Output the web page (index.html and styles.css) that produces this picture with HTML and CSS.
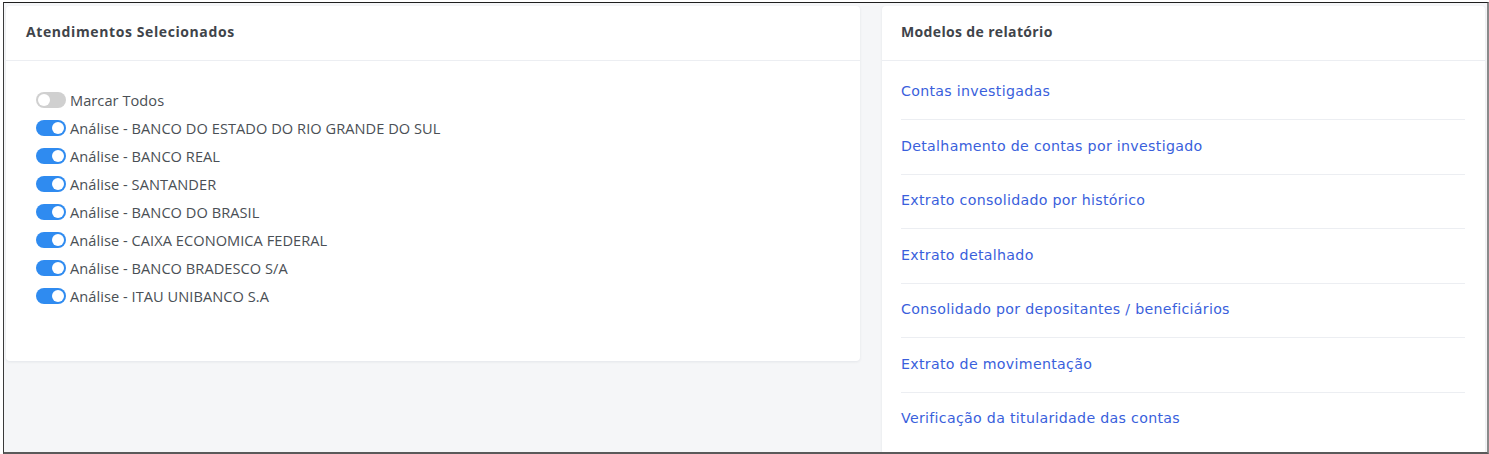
FILE: index.html
```html
<!DOCTYPE html>
<html lang="pt-BR">
<head>
<meta charset="utf-8">
<title>Relatórios</title>
<link rel="stylesheet" href="styles.css">
</head>
<body>
<div class="frame">
  <div class="layout">
    <section class="card card-left">
      <header class="card-header"><h4 class="card-title">Atendimentos Selecionados</h4></header>
      <div class="card-body">
        <label class="switch-row"><span class="switch"></span><span class="switch-label">Marcar Todos</span></label>
        <label class="switch-row"><span class="switch on"></span><span class="switch-label">Análise - BANCO DO ESTADO DO RIO GRANDE DO SUL</span></label>
        <label class="switch-row"><span class="switch on"></span><span class="switch-label">Análise - BANCO REAL</span></label>
        <label class="switch-row"><span class="switch on"></span><span class="switch-label">Análise - SANTANDER</span></label>
        <label class="switch-row"><span class="switch on"></span><span class="switch-label">Análise - BANCO DO BRASIL</span></label>
        <label class="switch-row"><span class="switch on"></span><span class="switch-label">Análise - CAIXA ECONOMICA FEDERAL</span></label>
        <label class="switch-row"><span class="switch on"></span><span class="switch-label">Análise - BANCO BRADESCO S/A</span></label>
        <label class="switch-row"><span class="switch on"></span><span class="switch-label">Análise - ITAU UNIBANCO S.A</span></label>
      </div>
    </section>
    <section class="card card-right">
      <header class="card-header"><h4 class="card-title">Modelos de relatório</h4></header>
      <ul class="report-list">
        <li class="report-item"><a href="#">Contas investigadas</a></li>
        <li class="report-item"><a href="#">Detalhamento de contas por investigado</a></li>
        <li class="report-item"><a href="#">Extrato consolidado por histórico</a></li>
        <li class="report-item"><a href="#">Extrato detalhado</a></li>
        <li class="report-item"><a href="#">Consolidado por depositantes / beneficiários</a></li>
        <li class="report-item"><a href="#">Extrato de movimentação</a></li>
        <li class="report-item"><a href="#">Verificação da titularidade das contas</a></li>
      </ul>
    </section>
  </div>
</div>
</body>
</html>
```
FILE: styles.css
```css
* { box-sizing: border-box; }
html, body { margin: 0; padding: 0; background: #ffffff; }
body {
  font-family: "Open Sans", "Liberation Sans", sans-serif;
  font-size: 14px;
  color: #495057;
}
.frame {
  margin: 2px 0 0 3px;
  width: 1486px;
  height: 452px;
  border-style: solid;
  border-color: #1e1e1e #8a8a8a #5a5a5a #3a3a3a;
  border-width: 1px 2px 2px 1px;
  background: #f5f6f8;
  overflow: hidden;
}
.layout {
  display: flex;
  align-items: flex-start;
  gap: 22px;
  padding: 3px 0 0 2px;
}
.card {
  background: #ffffff;
  border-radius: 4px;
  box-shadow: 0 1px 3px rgba(18, 38, 63, 0.08);
}
.card-left { width: 854px; height: 355px; }
.card-right { width: 603px; height: 460px; }
.card-header {
  height: 55px;
  border-bottom: 1px solid #eceef2;
  display: flex;
  align-items: center;
  padding: 0 20px 3px;
}
.card-right .card-header { padding-left: 19px; }
.card-title {
  margin: 0;
  font-size: 14px;
  font-weight: 700;
  letter-spacing: 0.6px;
  color: #3f444a;
}
.card-right .card-title { letter-spacing: 0.35px; }
.card-body {
  padding: 25px 30px 0;
  display: flex;
  flex-direction: column;
}
.switch-row {
  display: flex;
  align-items: center;
  height: 28px;
  gap: 4px;
}
.switch {
  position: relative;
  width: 30px;
  height: 16px;
  border-radius: 8px;
  background: #d0d0d0;
  flex: none;
}
.switch::after {
  content: "";
  position: absolute;
  top: 2px;
  left: 2px;
  width: 12px;
  height: 12px;
  border-radius: 50%;
  background: #ffffff;
}
.switch.on { background: #2f8bf0; }
.switch.on::after { left: 16px; }
.switch-label { font-size: 14.6px; letter-spacing: 0.05px; color: #4a4f55; }
.report-list {
  list-style: none;
  margin: 0;
  padding: 4.5px 20px 0 19px;
}
.report-item {
  padding: 15.5px 0 18px;
  border-bottom: 1px solid #eceef2;
  line-height: 20px;
}
.report-item:last-child { border-bottom: none; }
.report-item a {
  font-family: "DejaVu Sans", "Open Sans", sans-serif;
  color: #3a5fdc;
  text-decoration: none;
  font-size: 14.2px;
  letter-spacing: 0.3px;
}
```
